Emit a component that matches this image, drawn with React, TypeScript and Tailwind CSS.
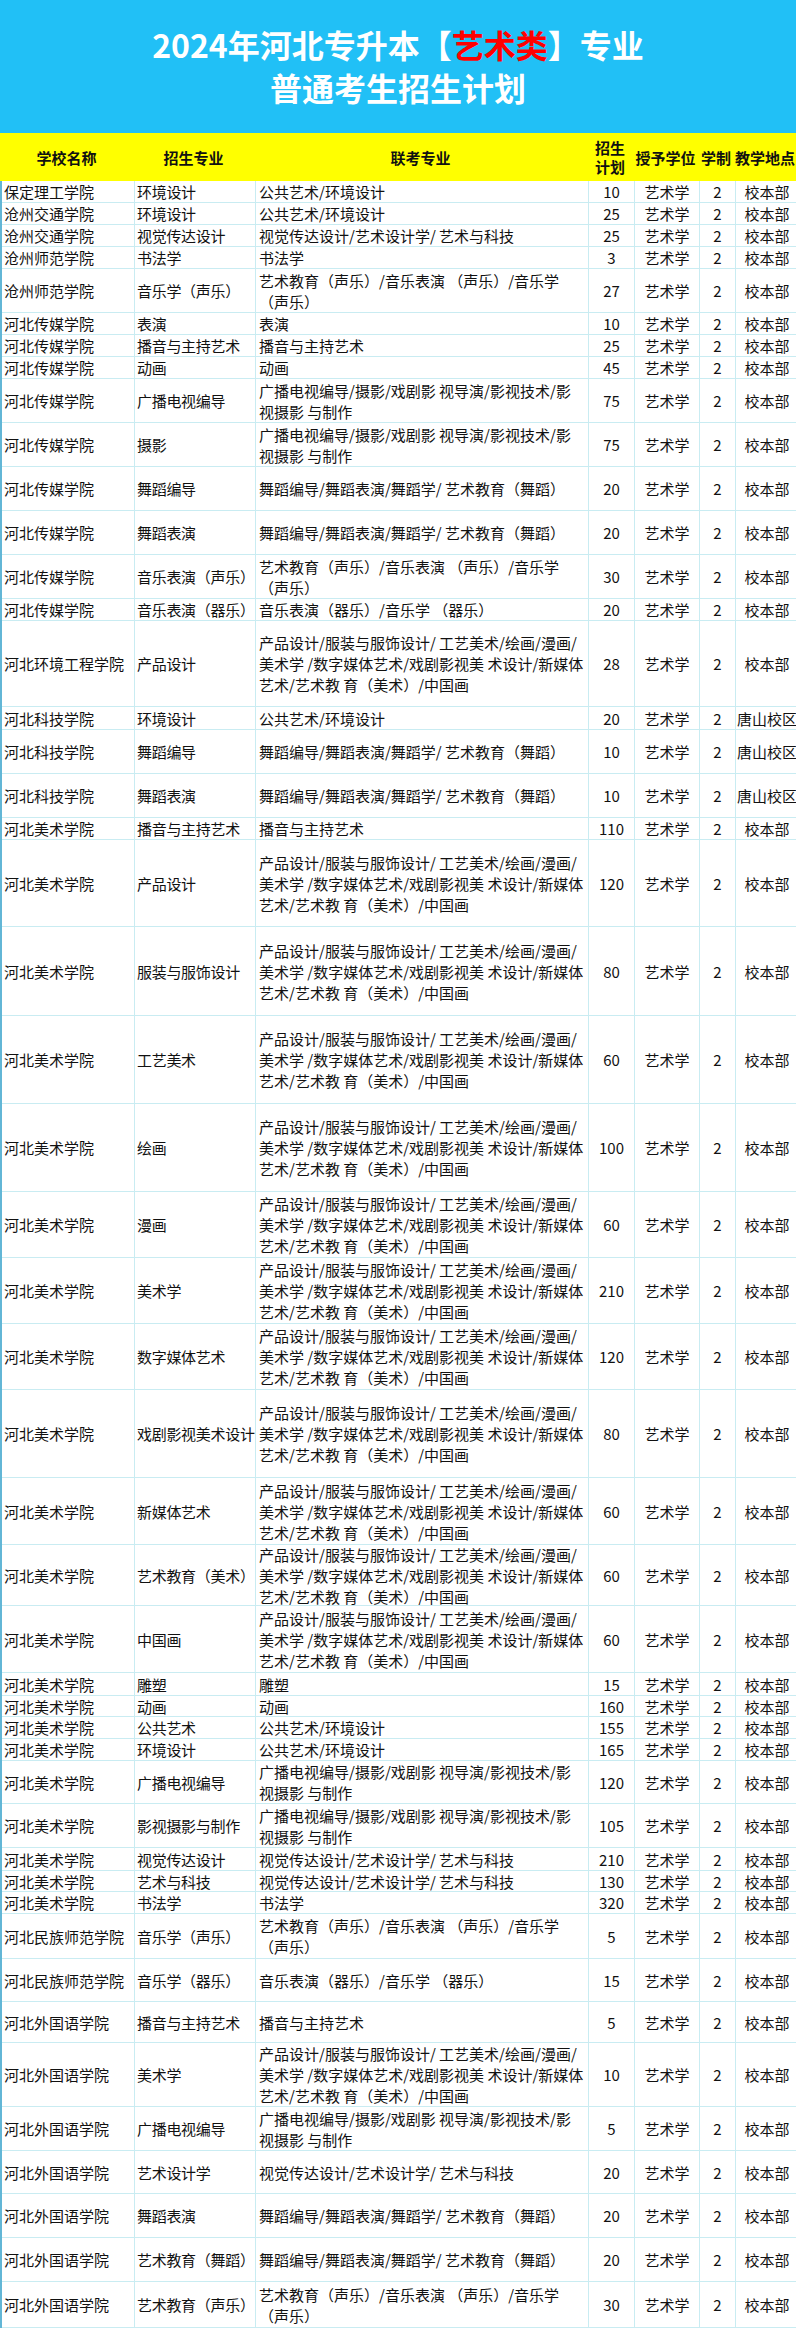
const MEI =
  "产品设计/服装与服饰设计/ 工艺美术/绘画/漫画/\n美术学 /数字媒体艺术/戏剧影视美 术设计/新媒体\n艺术/艺术教 育（美术）/中国画";
const GB = "广播电视编导/摄影/戏剧影 视导演/影视技术/影\n视摄影 与制作";
const WD = "舞蹈编导/舞蹈表演/舞蹈学/ 艺术教育（舞蹈）";
const SY = "艺术教育（声乐）/音乐表演 （声乐）/音乐学\n（声乐）";
const QY = "音乐表演（器乐）/音乐学 （器乐）";
const GG = "公共艺术/环境设计";
const SJ = "视觉传达设计/艺术设计学/ 艺术与科技";

type Row = { school: string; major: string; exam: string; plan: number; loc?: string; h: string };

const rows: Row[] = [
  { school: "保定理工学院", major: "环境设计", exam: GG, plan: 10, h: "h-[22px]" },
  { school: "沧州交通学院", major: "环境设计", exam: GG, plan: 25, h: "h-[22px]" },
  { school: "沧州交通学院", major: "视觉传达设计", exam: SJ, plan: 25, h: "h-[22px]" },
  { school: "沧州师范学院", major: "书法学", exam: "书法学", plan: 3, h: "h-[22px]" },
  { school: "沧州师范学院", major: "音乐学（声乐）", exam: SY, plan: 27, h: "h-[44px]" },
  { school: "河北传媒学院", major: "表演", exam: "表演", plan: 10, h: "h-[22px]" },
  { school: "河北传媒学院", major: "播音与主持艺术", exam: "播音与主持艺术", plan: 25, h: "h-[22px]" },
  { school: "河北传媒学院", major: "动画", exam: "动画", plan: 45, h: "h-[22px]" },
  { school: "河北传媒学院", major: "广播电视编导", exam: GB, plan: 75, h: "h-[44px]" },
  { school: "河北传媒学院", major: "摄影", exam: GB, plan: 75, h: "h-[44px]" },
  { school: "河北传媒学院", major: "舞蹈编导", exam: WD, plan: 20, h: "h-[44px]" },
  { school: "河北传媒学院", major: "舞蹈表演", exam: WD, plan: 20, h: "h-[44px]" },
  { school: "河北传媒学院", major: "音乐表演（声乐）", exam: SY, plan: 30, h: "h-[44px]" },
  { school: "河北传媒学院", major: "音乐表演（器乐）", exam: QY, plan: 20, h: "h-[22px]" },
  { school: "河北环境工程学院", major: "产品设计", exam: MEI, plan: 28, h: "h-[86px]" },
  { school: "河北科技学院", major: "环境设计", exam: GG, plan: 20, loc: "唐山校区", h: "h-[23px]" },
  { school: "河北科技学院", major: "舞蹈编导", exam: WD, plan: 10, loc: "唐山校区", h: "h-[44px]" },
  { school: "河北科技学院", major: "舞蹈表演", exam: WD, plan: 10, loc: "唐山校区", h: "h-[44px]" },
  { school: "河北美术学院", major: "播音与主持艺术", exam: "播音与主持艺术", plan: 110, h: "h-[22px]" },
  { school: "河北美术学院", major: "产品设计", exam: MEI, plan: 120, h: "h-[87px]" },
  { school: "河北美术学院", major: "服装与服饰设计", exam: MEI, plan: 80, h: "h-[89px]" },
  { school: "河北美术学院", major: "工艺美术", exam: MEI, plan: 60, h: "h-[88px]" },
  { school: "河北美术学院", major: "绘画", exam: MEI, plan: 100, h: "h-[88px]" },
  { school: "河北美术学院", major: "漫画", exam: MEI, plan: 60, h: "h-[66px]" },
  { school: "河北美术学院", major: "美术学", exam: MEI, plan: 210, h: "h-[66px]" },
  { school: "河北美术学院", major: "数字媒体艺术", exam: MEI, plan: 120, h: "h-[66px]" },
  { school: "河北美术学院", major: "戏剧影视美术设计", exam: MEI, plan: 80, h: "h-[88px]" },
  { school: "河北美术学院", major: "新媒体艺术", exam: MEI, plan: 60, h: "h-[67px]" },
  { school: "河北美术学院", major: "艺术教育（美术）", exam: MEI, plan: 60, h: "h-[61px]" },
  { school: "河北美术学院", major: "中国画", exam: MEI, plan: 60, h: "h-[67px]" },
  { school: "河北美术学院", major: "雕塑", exam: "雕塑", plan: 15, h: "h-[23px]" },
  { school: "河北美术学院", major: "动画", exam: "动画", plan: 160, h: "h-[21px]" },
  { school: "河北美术学院", major: "公共艺术", exam: GG, plan: 155, h: "h-[22px]" },
  { school: "河北美术学院", major: "环境设计", exam: GG, plan: 165, h: "h-[22px]" },
  { school: "河北美术学院", major: "广播电视编导", exam: GB, plan: 120, h: "h-[43px]" },
  { school: "河北美术学院", major: "影视摄影与制作", exam: GB, plan: 105, h: "h-[44px]" },
  { school: "河北美术学院", major: "视觉传达设计", exam: SJ, plan: 210, h: "h-[23px]" },
  { school: "河北美术学院", major: "艺术与科技", exam: SJ, plan: 130, h: "h-[21px]" },
  { school: "河北美术学院", major: "书法学", exam: "书法学", plan: 320, h: "h-[22px]" },
  { school: "河北民族师范学院", major: "音乐学（声乐）", exam: SY, plan: 5, h: "h-[45px]" },
  { school: "河北民族师范学院", major: "音乐学（器乐）", exam: QY, plan: 15, h: "h-[43px]" },
  { school: "河北外国语学院", major: "播音与主持艺术", exam: "播音与主持艺术", plan: 5, h: "h-[41px]" },
  { school: "河北外国语学院", major: "美术学", exam: MEI, plan: 10, h: "h-[64px]" },
  { school: "河北外国语学院", major: "广播电视编导", exam: GB, plan: 5, h: "h-[44px]" },
  { school: "河北外国语学院", major: "艺术设计学", exam: SJ, plan: 20, h: "h-[43px]" },
  { school: "河北外国语学院", major: "舞蹈表演", exam: WD, plan: 20, h: "h-[44px]" },
  { school: "河北外国语学院", major: "艺术教育（舞蹈）", exam: WD, plan: 20, h: "h-[44px]" },
  { school: "河北外国语学院", major: "艺术教育（声乐）", exam: SY, plan: 30, h: "h-[46px]" },
];

const cols = "grid grid-cols-[133px_121px_333px_46px_65px_36px_62px]";
const cell = "flex items-center overflow-hidden border-r border-[#c9ecf2] last:border-r-0";

export default function App() {
  return (
    <div className="w-[796px] bg-white [font-family:'Noto_Sans_CJK_SC','Noto_Sans',sans-serif] text-[#111]">
      <div className="flex h-[133px] flex-col items-center bg-[#21c0f6] pt-[23px] text-[32px] font-bold leading-[43px] text-white">
        <p>
          2024年河北专升本【<span className="text-[#ff0000]">艺术类</span>】专业
        </p>
        <p>普通考生招生计划</p>
      </div>

      <div className={`${cols} h-[48px] bg-[#ffff00] text-[15px] font-bold leading-[19px]`}>
        <div className="flex items-center justify-center">学校名称</div>
        <div className="flex items-center justify-center">招生专业</div>
        <div className="flex items-center justify-center">联考专业</div>
        <div className="flex items-center justify-center text-center">
          招生
          <br />
          计划
        </div>
        <div className="flex items-center justify-center whitespace-nowrap">授予学位</div>
        <div className="flex items-center justify-center whitespace-nowrap">学制</div>
        <div className="flex items-center justify-center whitespace-nowrap">教学地点</div>
      </div>

      <div className="border-l-2 border-[#62b6d6] text-[15px] leading-[21px]">
        {rows.map((r, i) => (
          <div key={i} className={`${cols} ${r.h} border-b border-[#c9ecf2]`}>
            <div className={`${cell} whitespace-nowrap pl-[2px]`}>{r.school}</div>
            <div className={`${cell} whitespace-nowrap pl-[2px] tracking-[-0.3px]`}>{r.major}</div>
            <div className={`${cell} whitespace-pre pl-[3px]`}>{r.exam}</div>
            <div className={`${cell} justify-center`}>{r.plan}</div>
            <div className={`${cell} justify-center`}>艺术学</div>
            <div className={`${cell} justify-center`}>2</div>
            <div className={`${cell} justify-center whitespace-nowrap`}>{r.loc ?? "校本部"}</div>
          </div>
        ))}
      </div>
    </div>
  );
}
